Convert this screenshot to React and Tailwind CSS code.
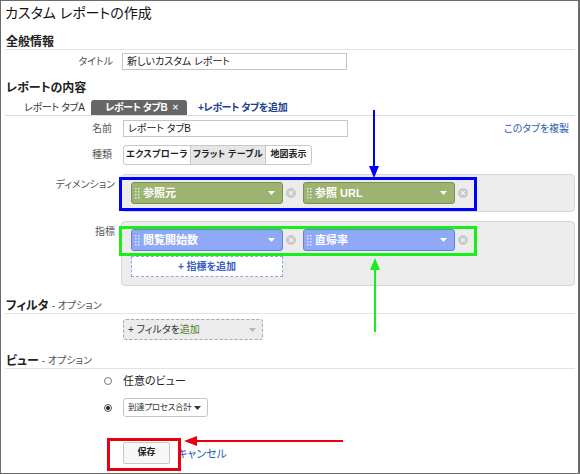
import React from "react";

function Grip() {
  const dots = [];
  for (let r = 0; r < 4; r++) {
    for (let c = 0; c < 2; c++) {
      dots.push(<rect key={`${r}-${c}`} x={c * 3} y={r * 3} width="1.5" height="1.5" fill="#ffffff" opacity="0.75" />);
    }
  }
  return (
    <svg width="5" height="11" viewBox="0 0 5 11" className="shrink-0">
      {dots}
    </svg>
  );
}

function Caret({ color = "#ffffff" }) {
  return (
    <svg width="7" height="4" viewBox="0 0 7 4" className="shrink-0">
      <path d="M0 0 L7 0 L3.5 4 Z" fill={color} />
    </svg>
  );
}

function RemoveIcon() {
  return (
    <svg width="10" height="10" viewBox="0 0 10 10" className="shrink-0">
      <circle cx="5" cy="5" r="4.6" fill="#cbcbcb" stroke="#bdbdbd" strokeWidth="0.6" />
      <path d="M3.2 3.2 L6.8 6.8 M6.8 3.2 L3.2 6.8" stroke="#f4f4f4" strokeWidth="1.1" />
    </svg>
  );
}

function Chip({ label, kind }) {
  const cls =
    kind === "green"
      ? "flex h-[22px] w-[152px] items-center rounded-[3px] border border-[#7c914f] bg-[#9db371] pl-[3px] pr-[7px]"
      : "flex h-[22px] w-[152px] items-center rounded-[3px] border border-[#6680d6] bg-[#90a9f6] pl-[3px] pr-[7px]";
  return (
    <div className="flex items-center">
      <div className={cls}>
        <Grip />
        <span className="ml-[3px] flex-1 whitespace-nowrap text-[11px] font-bold leading-[14px] text-white">{label}</span>
        <Caret />
      </div>
      <div className="ml-[3px]">
        <RemoveIcon />
      </div>
    </div>
  );
}

function Heading({ title, sub, line = true }) {
  return (
    <div
      className={
        line
          ? "ml-[4px] mr-[3px] flex h-[16px] items-center border-b border-[#e3e3e3] pl-[1px]"
          : "ml-[4px] mr-[3px] flex h-[16px] items-center pl-[1px]"
      }
    >
      <span className="text-[12px] font-bold leading-[16px] text-[#222]">{title}</span>
      {sub && <span className="ml-[3px] text-[10px] leading-[16px] text-[#555]">{sub}</span>}
    </div>
  );
}

export default function App() {
  return (
    <div className="relative h-[474px] w-[580px] overflow-hidden border-b border-l border-r-2 border-t border-[#6b6b6b] bg-white font-['Liberation_Sans','Noto_Sans_CJK_JP',sans-serif] text-[#333] [font-feature-settings:'palt']">
      {/* Page title */}
      <div className="pl-[4px] pt-[3px] text-[14px] leading-[18px] text-[#111]">カスタム レポートの作成</div>

      {/* General */}
      <div className="mt-[12px]">
        <Heading title="全般情報" />
      </div>
      <div className="mt-[3px] flex h-[17px] items-center">
        <div className="w-[112px] text-right text-[10px] leading-[14px] text-[#555]">タイトル</div>
        <div className="ml-[9px] h-[17px] w-[225px] whitespace-nowrap border border-[#c5c5c5] px-[4px] text-[10px] leading-[15px] text-[#222]">
          新しいカスタム レポート
        </div>
      </div>

      {/* Report content */}
      <div className="mt-[10px]">
        <Heading title="レポートの内容" line={false} />
      </div>
      <div className="ml-[4px] mr-[3px] mt-[4px] flex h-[16px] items-end border-b border-[#dcdcdc]">
        <div className="flex h-[15px] w-[86px] items-center whitespace-nowrap pl-[19px] text-[10px] tracking-[-0.3px] text-[#333]">
          レポート タブA
        </div>
        <div className="flex h-[15px] w-[96px] items-center whitespace-nowrap rounded-t-[3px] bg-[#666666] pl-[14px] pr-[8px] text-[10px] font-bold tracking-[-0.4px] text-white">
          <span className="flex-1">レポート タブB</span>
          <span className="text-[8px] text-[#e8e8e8]">✕</span>
        </div>
        <div className="ml-[11px] flex h-[15px] items-center whitespace-nowrap text-[10px] font-bold tracking-[-0.4px] text-[#1c3f8f]">
          +レポート タブを追加
        </div>
      </div>

      {/* Name */}
      <div className="mt-[4px] flex h-[17px] items-center">
        <div className="w-[111px] text-right text-[10px] leading-[14px] text-[#555]">名前</div>
        <div className="ml-[11px] h-[17px] w-[225px] whitespace-nowrap border border-[#c5c5c5] px-[4px] text-[10px] leading-[15px] text-[#222]">
          レポート タブB
        </div>
        <div className="ml-auto mr-[9px] whitespace-nowrap text-[10px] leading-[14px] text-[#2a5db0]">このタブを複製</div>
      </div>

      {/* Type */}
      <div className="mt-[8px] flex h-[20px] items-center">
        <div className="w-[111px] text-right text-[10px] leading-[14px] text-[#555]">種類</div>
        <div className="ml-[11px] flex h-[20px] overflow-hidden whitespace-nowrap rounded-[3px] border border-[#c8c8c8] bg-white text-[9px] font-bold text-[#222]">
          <div className="flex w-[66px] items-center justify-center tracking-[0.3px]">エクスプローラ</div>
          <div className="flex w-[76px] items-center justify-center border-x border-[#c8c8c8] bg-[#e6e6e6] tracking-[0.3px]">
            フラット テーブル
          </div>
          <div className="flex w-[45px] items-center justify-center">地図表示</div>
        </div>
      </div>

      {/* Dimensions */}
      <div className="mt-[9px] flex items-start">
        <div className="w-[114px] whitespace-nowrap pt-[5px] text-right text-[10px] leading-[12px] text-[#555]">ディメンション</div>
        <div className="ml-[6px] w-[454px] rounded-[4px] border border-[#d5d5d5] bg-[#ececec] pb-[7px] pl-[9px] pt-[7px]">
          <div className="flex items-center gap-[7px]">
            <Chip label="参照元" kind="green" />
            <Chip label="参照 URL" kind="green" />
          </div>
        </div>
      </div>

      {/* Metrics */}
      <div className="mt-[9px] flex items-start">
        <div className="w-[114px] pt-[5px] text-right text-[10px] leading-[12px] text-[#555]">指標</div>
        <div className="ml-[6px] w-[454px] rounded-[4px] border border-[#d5d5d5] bg-[#ececec] pb-[8px] pl-[9px] pt-[7px]">
          <div className="flex items-center gap-[7px]">
            <Chip label="閲覧開始数" kind="blue" />
            <Chip label="直帰率" kind="blue" />
          </div>
          <div className="mt-[5px] flex h-[21px] w-[152px] items-center justify-center border border-dashed border-[#8ea4e6] bg-white text-[10px] font-bold text-[#3b5fc4]">
            + 指標を追加
          </div>
        </div>
      </div>

      {/* Filter */}
      <div className="mt-[12px]">
        <Heading title="フィルタ" sub="- オプション" />
      </div>
      <div className="ml-[122px] mt-[5px] flex h-[21px] w-[140px] items-center rounded-[3px] border border-dashed border-[#a8a8a8] bg-[#ececec] pl-[4px] pr-[6px] text-[10px]">
        <span className="flex-1 whitespace-nowrap text-[#333]">
          + フィルタを<span className="text-[#4a7a22]">追加</span>
        </span>
        <Caret color="#b5b5b5" />
      </div>

      {/* View */}
      <div className="mt-[13px]">
        <Heading title="ビュー" sub="- オプション" />
      </div>
      <div className="mt-[4px] flex h-[16px] items-center">
        <div className="ml-[103px] h-[8px] w-[8px] rounded-full border border-[#777] bg-white" />
        <div className="ml-[11px] text-[11px] leading-[14px] text-[#222]">任意のビュー</div>
      </div>
      <div className="mt-[9px] flex h-[19px] items-center">
        <div className="ml-[103px] flex h-[8px] w-[8px] items-center justify-center rounded-full border border-[#555] bg-white">
          <div className="h-[4px] w-[4px] rounded-full bg-[#222]" />
        </div>
        <div className="ml-[11px] flex h-[19px] w-[85px] items-center whitespace-nowrap rounded-[3px] border border-[#c5c5c5] bg-white pl-[4px] pr-[6px] text-[8.5px] tracking-[-0.3px] text-[#333]">
          <span className="flex-1">到達プロセス合計</span>
          <Caret color="#333333" />
        </div>
      </div>

      {/* Buttons */}
      <div className="mt-[25px] flex h-[22px] items-center">
        <div className="ml-[122px] flex h-[22px] w-[47px] items-center justify-center rounded-[2px] border border-[#c8c8c8] bg-[#f7f7f7] text-[9px] font-bold text-[#222]">
          保存
        </div>
        <div className="ml-[7px] mt-[2px] whitespace-nowrap text-[11px] text-[#1f5fb8]">キャンセル</div>
      </div>

      {/* Annotations overlay */}
      <svg
        className="pointer-events-none absolute left-[-1px] top-[-1px]"
        width="580"
        height="474"
        viewBox="0 0 580 474"
      >
        <rect x="120.5" y="178.5" width="355" height="31" fill="none" stroke="#0000ff" strokeWidth="3" />
        <line x1="374" y1="110" x2="374" y2="168" stroke="#0000ff" strokeWidth="2" />
        <path d="M369 166 L379 166 L374 178 Z" fill="#0000ff" />

        <rect x="120.5" y="227.5" width="355" height="27" fill="none" stroke="#18ee18" strokeWidth="3" />
        <line x1="375" y1="268" x2="375" y2="332" stroke="#18ee18" strokeWidth="2" />
        <path d="M370 270 L380 270 L375 258 Z" fill="#18ee18" />

        <rect x="108.5" y="439.5" width="71" height="30" fill="none" stroke="#e60012" strokeWidth="3" />
        <line x1="195" y1="441" x2="343" y2="441" stroke="#e60012" strokeWidth="2" />
        <path d="M197 436 L197 446 L184 441 Z" fill="#e60012" />
      </svg>
    </div>
  );
}
